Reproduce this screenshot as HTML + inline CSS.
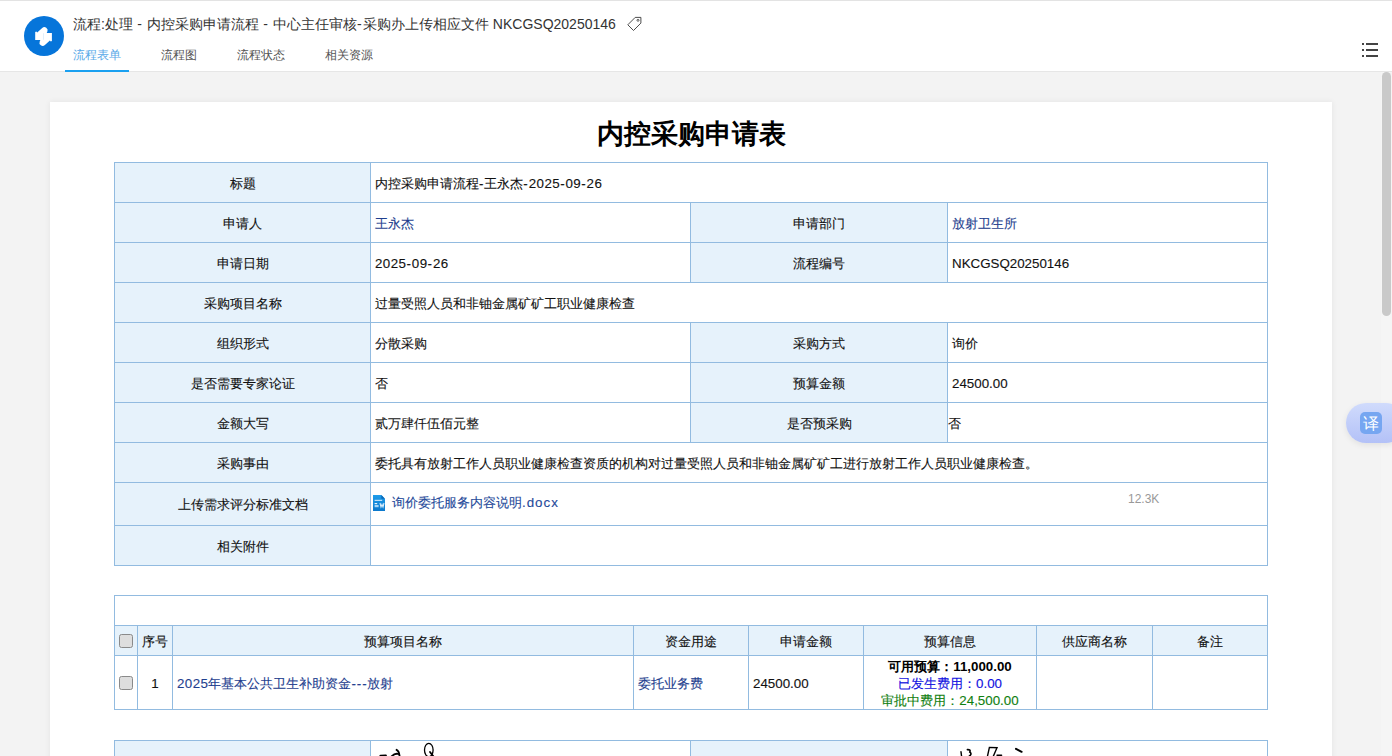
<!DOCTYPE html>
<html><head><meta charset="utf-8">
<style>
*{box-sizing:border-box;margin:0;padding:0}
html,body{width:1392px;height:756px;overflow:hidden}
body{background:#f3f3f3;font-family:"Liberation Sans",sans-serif;color:#111;position:relative}
#hdr{position:absolute;left:0;top:0;width:1392px;height:72px;background:#fff;border-top:1px solid #e3e3e3;border-bottom:1px solid #e6e6e6}
#logo{position:absolute;left:24px;top:16px;width:40px;height:40px}
#ttl{position:absolute;left:73px;top:15px;font-size:14px;color:#333;white-space:nowrap;line-height:18px}
.sp{letter-spacing:0.53px}.hy{letter-spacing:1.3px}
.tab{position:absolute;top:47px;font-size:12px;color:#555;line-height:16px;white-space:nowrap}
#uline{position:absolute;left:65px;top:70px;width:64px;height:2px;background:#1aa0f0}
#tag{position:absolute;left:626px;top:15px;width:17px;height:17px}
#menu{position:absolute;left:1361px;top:42px;width:18px;height:16px}
#track{position:absolute;left:1381px;top:72px;width:11px;height:684px;background:#f5f5f5}
#scroll{position:absolute;left:1382px;top:72px;width:9px;height:244px;background:#c9c9c9;border-radius:4.5px}
#paper{position:absolute;left:50px;top:102px;width:1282px;height:700px;background:#fff;box-shadow:0 0 6px rgba(0,0,0,.07)}
#ftitle{position:absolute;left:491px;width:400px;top:116px;text-align:center;font-size:27px;font-weight:bold;color:#000;line-height:36px;white-space:nowrap}
table{position:absolute;border-collapse:collapse;table-layout:fixed;font-size:13.33px}
td{-webkit-text-stroke:0.12px currentColor;border:1px solid #92bbe0;height:40px;padding:2px 4px 0 4px;color:#111;white-space:nowrap;background:#fff}
td.l{background:#e6f2fb;text-align:center}
.blue{color:#1f3f8f}
.h2{letter-spacing:0.9px}.dg{letter-spacing:0.45px}
#t2 td{height:30px}
#t2 td.c{text-align:center;padding:2px 0 0 0}
.cb{display:inline-block;width:14px;height:14px;border:1px solid #8a8a8a;border-radius:2.5px;background:#dedede;vertical-align:middle;position:relative;top:-1px;left:-0.5px}
#xlate{position:absolute;left:1346px;top:403px;width:60px;height:40px;border-radius:20px;background:linear-gradient(#d0dbfc,#b3c1f7);box-shadow:0 2px 6px rgba(0,0,0,.08)}
#xlate div{position:absolute;left:14px;top:9px;width:22px;height:22px;border-radius:5px;background:#76a6f1;color:#fff;font-size:16px;line-height:24px;text-align:center}
</style></head><body>
<div id="hdr"></div>
<svg id="logo" viewBox="0 0 40 40">
<circle cx="20" cy="20" r="20" fill="#0675da"/>
<path d="M11.2 23.9 L11.2 15.9 L12.3 15.4 L13.2 16.6 L18.2 12 A3.2 3.2 0 0 1 23.4 15.5 L22.6 17.2 L19.7 17.2 L19.7 23.9 Z" fill="#fff"/>
<path d="M27.9 17.1 L27.9 25.1 L26.8 25.6 L25.9 24.4 L20.9 29 A3.2 3.2 0 0 1 15.7 25.5 L16.5 23.8 L19.4 23.8 L19.4 17.1 Z" fill="#fff"/>
</svg>
<div id="ttl">流程:处理<span class="sp"> - </span>内控采购申请流程<span class="sp"> - </span>中心主任审核<span class="hy">-</span>采购办上传相应文件 NKCGSQ20250146</div>
<svg id="tag" viewBox="0 0 17 17"><path d="M1.8 9.8 L9.2 2.4 L14.9 2.4 L14.9 8.1 L7.5 15.5 Z" fill="none" stroke="#3a3a3a" stroke-width="0.9" stroke-linejoin="round"/><circle cx="12" cy="5.3" r="1" fill="none" stroke="#3a3a3a" stroke-width="0.8"/></svg>
<div class="tab" style="left:73px;color:#5aaae8">流程表单</div>
<div class="tab" style="left:161px">流程图</div>
<div class="tab" style="left:237px">流程状态</div>
<div class="tab" style="left:325px">相关资源</div>
<div id="uline"></div>
<svg id="menu" viewBox="0 0 18 16"><rect x="1" y="1" width="2" height="2" fill="#444"/><rect x="1" y="7" width="2" height="2" fill="#444"/><rect x="1" y="13" width="2" height="2" fill="#444"/><rect x="5" y="1" width="12" height="2" fill="#444"/><rect x="5" y="7" width="12" height="2" fill="#444"/><rect x="5" y="13" width="12" height="2" fill="#444"/></svg>
<div id="track"></div><div id="scroll"></div>
<div id="paper"></div>
<div id="ftitle">内控采购申请表</div>

<table id="t1" style="left:114px;top:162px;width:1153px">
<colgroup><col style="width:256px"><col style="width:320px"><col style="width:257px"><col style="width:320px"></colgroup>
<tr><td class="l">标题</td><td colspan="3">内控采购申请流程<span class="h2">-</span>王永杰<span class="h2">-</span><span class="dg">2025</span><span class="h2">-</span><span class="dg">09</span><span class="h2">-</span><span class="dg">26</span></td></tr>
<tr><td class="l">申请人</td><td class="blue">王永杰</td><td class="l">申请部门</td><td class="blue">放射卫生所</td></tr>
<tr><td class="l">申请日期</td><td><span class="dg">2025</span><span class="h2">-</span><span class="dg">09</span><span class="h2">-</span><span class="dg">26</span></td><td class="l">流程编号</td><td>NKCGSQ20250146</td></tr>
<tr><td class="l">采购项目名称</td><td colspan="3">过量受照人员和非铀金属矿矿工职业健康检查</td></tr>
<tr><td class="l">组织形式</td><td>分散采购</td><td class="l">采购方式</td><td>询价</td></tr>
<tr><td class="l">是否需要专家论证</td><td>否</td><td class="l">预算金额</td><td>24500.00</td></tr>
<tr><td class="l">金额大写</td><td>贰万肆仟伍佰元整</td><td class="l">是否预采购</td><td style="padding-left:0">否</td></tr>
<tr><td class="l">采购事由</td><td colspan="3">委托具有放射工作人员职业健康检查资质的机构对过量受照人员和非铀金属矿矿工进行放射工作人员职业健康检查。</td></tr>
<tr><td class="l" style="height:43px">上传需求评分标准文档</td><td colspan="3" style="position:relative">
<svg style="position:absolute;left:2px;top:12px" width="12" height="16" viewBox="0 0 12 16"><defs><linearGradient id="fg" x1="0" y1="0" x2="0" y2="1"><stop offset="0" stop-color="#1e9cea"/><stop offset="1" stop-color="#0b78cc"/></linearGradient></defs><path d="M0 0 H8.3 L12 3.7 V16 H0 Z" fill="url(#fg)"/><path d="M8.3 0 L12 3.7 H8.3 Z" fill="#0d6ab8"/><rect x="1.6" y="4.8" width="7.6" height="1.1" fill="#cfe8fb"/><rect x="1.6" y="8" width="2.6" height="1.2" fill="#e8f4fd"/><rect x="1.6" y="10" width="4" height="2.2" fill="#a9d6f7"/><path d="M7 8 L8 12 L9 9.5 L10 12 L11 8" stroke="#d6ecfc" stroke-width="1.1" fill="none"/></svg>
<span class="blue" style="position:absolute;left:21px;top:11px;color:#1f4a9a">询价委托服务内容说明<span style="letter-spacing:1px">.docx</span></span>
<span style="position:absolute;left:757px;top:9px;color:#999;font-size:12px;-webkit-text-stroke:0">12.3K</span></td></tr>
<tr><td class="l">相关附件</td><td colspan="3"></td></tr>
</table>

<table id="t2" style="left:114px;top:595px;width:1153px">
<colgroup><col style="width:23px"><col style="width:35px"><col style="width:461px"><col style="width:115px"><col style="width:115px"><col style="width:173px"><col style="width:116px"><col style="width:115px"></colgroup>
<tr><td colspan="8"></td></tr>
<tr><td class="l c"><span class="cb"></span></td><td class="l c">序号</td><td class="l c">预算项目名称</td><td class="l c">资金用途</td><td class="l c">申请金额</td><td class="l c">预算信息</td><td class="l c">供应商名称</td><td class="l c">备注</td></tr>
<tr><td class="c" style="height:54px"><span class="cb"></span></td><td class="c">1</td><td class="blue"><span class="dg">2025</span>年基本公共卫生补助资金<span class="h2">---</span>放射</td><td class="blue">委托业务费</td><td>24500.00</td>
<td class="c" style="line-height:17px;padding-top:1px"><b style="color:#000;-webkit-text-stroke:0">可用预算：11,000.00</b><br><span style="color:#1010e0">已发生费用：0.00</span><br><span style="color:#108010">审批中费用：24,500.00</span></td><td></td><td></td></tr>
</table>

<table id="t3" style="left:114px;top:740px;width:1153px">
<colgroup><col style="width:256px"><col style="width:320px"><col style="width:257px"><col style="width:320px"></colgroup>
<tr><td class="l" style="height:60px"></td><td style="position:relative">
<svg style="position:absolute;left:4px;top:1px" width="100" height="20" viewBox="0 0 100 20"><g stroke="#000" fill="none" stroke-linecap="round"><path d="M5.5 13.8 L10.8 13.5" stroke-width="2.2"/><path d="M16.5 14.5 Q20 11 23.5 12" stroke-width="1.8"/><path d="M21.6 7.8 Q24.2 9 24.6 14.5" stroke-width="1.9"/><ellipse cx="53.8" cy="8" rx="4.3" ry="6.7" stroke-width="1.3"/><path d="M55 10 L58.5 14.5" stroke-width="1.8"/></g></svg>
</td><td class="l"></td><td style="position:relative">
<svg style="position:absolute;left:4px;top:1px" width="100" height="20" viewBox="0 0 100 20"><g stroke="#000" fill="none" stroke-linecap="round"><path d="M9 9.8 L9.6 14.5" stroke-width="1.4"/><path d="M15.4 7.6 Q19 7.4 17.8 10 Q20.5 12 17 14.5" stroke-width="1.6"/><path d="M35.4 14.5 L37.4 5.4 L45 5.7 L41.2 14.5" stroke-width="1.4"/><path d="M45 13.3 L49.6 13.3" stroke-width="1.4"/><path d="M64 6.8 L69.6 9.8" stroke-width="2"/></g></svg>
</td></tr>
</table>

<div id="xlate"><div>译</div></div>
</body></html>
